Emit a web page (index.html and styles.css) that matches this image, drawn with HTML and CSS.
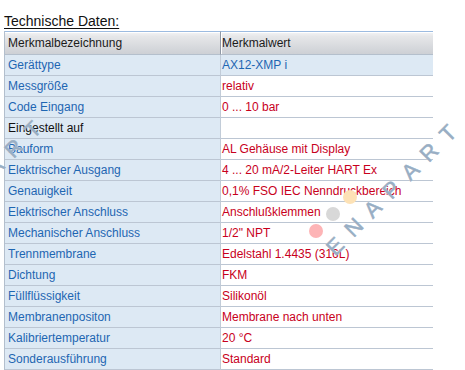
FILE: index.html
```html
<!DOCTYPE html>
<html lang="de">
<head>
<meta charset="utf-8">
<title>Technische Daten</title>
<link rel="stylesheet" href="styles.css">
</head>
<body>
<div class="page">
  <h2 class="title">Technische Daten:</h2>
  <table class="spec">
    <thead>
      <tr><th class="c1">Merkmalbezeichnung</th><th class="c2">Merkmalwert</th></tr>
    </thead>
    <tbody>
      <tr class="hl"><td class="c1">Gerättype</td><td class="c2">AX12-XMP i</td></tr>
      <tr><td class="c1">Messgröße</td><td class="c2">relativ</td></tr>
      <tr><td class="c1">Code Eingang</td><td class="c2">0 ... 10 bar</td></tr>
      <tr class="plain"><td class="c1">Eingestellt auf</td><td class="c2"></td></tr>
      <tr><td class="c1">Bauform</td><td class="c2">AL Gehäuse mit Display</td></tr>
      <tr><td class="c1">Elektrischer Ausgang</td><td class="c2">4 ... 20 mA/2-Leiter HART Ex</td></tr>
      <tr><td class="c1">Genauigkeit</td><td class="c2">0,1% FSO IEC Nenndruckbereich</td></tr>
      <tr><td class="c1">Elektrischer Anschluss</td><td class="c2">Anschlußklemmen</td></tr>
      <tr><td class="c1">Mechanischer Anschluss</td><td class="c2">1/2" NPT</td></tr>
      <tr><td class="c1">Trennmembrane</td><td class="c2">Edelstahl 1.4435 (316L)</td></tr>
      <tr><td class="c1">Dichtung</td><td class="c2">FKM</td></tr>
      <tr><td class="c1">Füllflüssigkeit</td><td class="c2">Silikonöl</td></tr>
      <tr><td class="c1">Membranenpositon</td><td class="c2">Membrane nach unten</td></tr>
      <tr><td class="c1">Kalibriertemperatur</td><td class="c2">20 °C</td></tr>
      <tr><td class="c1">Sonderausführung</td><td class="c2">Standard</td></tr>
    </tbody>
  </table>
</div>
<span class="dot dot-orange"></span>
<span class="dot dot-gray"></span>
<span class="dot dot-pink"></span>
<div class="wm wm-right"><span>E</span><span>N</span><span>A</span><span>P</span><span>A</span><span>R</span><span>T</span></div>
<div class="wm wm-left"><span>A</span><span>R</span><span>T</span></div>
</body>
</html>
```
FILE: styles.css
```css
html, body {
  margin: 0;
  padding: 0;
  background: #ffffff;
}
body {
  font-family: "Liberation Sans", Arial, sans-serif;
  font-size: 12px;
  color: #1a1a1a;
  overflow: hidden;
  position: relative;
  width: 465px;
  height: 370px;
}
.page {
  padding: 12px 0 0 4px;
}
.title {
  margin: 0;
  font-size: 14px;
  font-weight: normal;
  line-height: 19px;
  height: 19px;
  text-decoration: underline;
  text-underline-offset: 2px;
  color: #111;
}
.spec {
  border-collapse: separate;
  border-spacing: 0;
  width: 429px;
  table-layout: fixed;
  border-left: 1px solid #b3bfcd;
}
.spec th, .spec td {
  padding: 0;
  text-align: left;
  font-weight: normal;
  white-space: nowrap;
  overflow: hidden;
}
.spec th {
  height: 22px;
  line-height: 22px;
  border-top: 1px solid #9cbbe0;
  border-bottom: 1px solid #b4bfcc;
  background: linear-gradient(#f4f4f5 0, #e6e7e9 20%, #cdd0d5 100%);
  box-shadow: inset 0 1px 0 #ffffff;
  color: #1b1b1b;
}
.spec th.c1 {
  width: 212px;
  padding-left: 3px;
  border-right: 1px solid #8f98a4;
}
.spec th.c2 {
  padding-left: 1px;
  box-shadow: inset 1px 1px 0 #ffffff;
}
.spec td {
  height: 20px;
  line-height: 20px;
  border-bottom: 1px solid #bcc6d3;
}
.spec td.c1 {
  padding-left: 3px;
  background: #dde9f4;
  color: #1e66b2;
  border-right: 1px solid #c2ccd8;
}
.spec td.c2 {
  padding-left: 1px;
  background: #ffffff;
  color: #c8001c;
}
.spec tr.hl td.c2 {
  background: #dde9f4;
  color: #1e66b2;
}
.spec tr.plain td.c1 {
  color: #111111;
}
.dot {
  position: absolute;
  width: 14px;
  height: 14px;
  border-radius: 50%;
}
.dot-orange { left: 343px; top: 190px; background: #fde2b6; }
.dot-gray { left: 326px; top: 207px; background: #d8d8d8; }
.dot-pink { left: 309px; top: 224px; background: #fdb4b6; }
.wm {
  position: absolute;
  display: flex;
  height: 24px;
  font-family: "Liberation Sans", Arial, sans-serif;
  font-size: 22px;
  line-height: 24px;
  color: #98aec4;
  -webkit-text-stroke: 0.5px #98aec4;
  text-shadow: 0 0 1px #ffffff;
  transform-origin: 0 50%;
  transform: rotate(-45deg);
  white-space: nowrap;
}
.wm span {
  display: block;
  width: 26.6px;
  text-align: center;
}
.wm-right { left: 326px; top: 244px; }
.wm-left { left: -14px; top: 165px; }
```
